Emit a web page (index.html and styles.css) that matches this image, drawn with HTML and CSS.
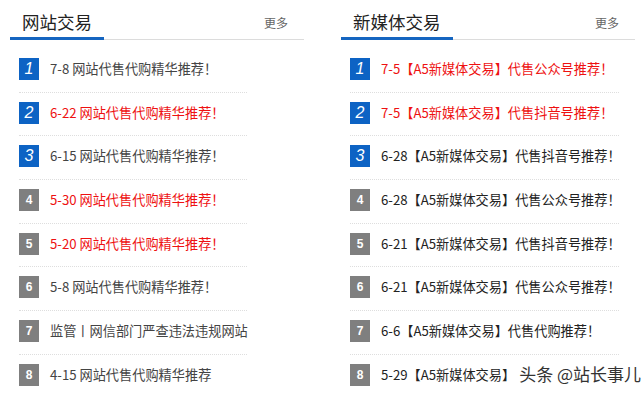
FILE: index.html
```html
<!DOCTYPE html>
<html lang="zh-CN">
<head>
<meta charset="utf-8">
<title>交易</title>
<link rel="stylesheet" href="styles.css">
</head>
<body>
<div class="page">
  <section class="panel">
    <div class="panel-head">
      <h2 class="panel-title">网站交易</h2>
      <a class="more">更多</a>
    </div>
    <ul class="list list-left">
      <li class="item"><span class="badge badge-top">1</span><span class="text">7-8 网站代售代购精华推荐！</span></li>
      <li class="item"><span class="badge badge-top">2</span><span class="text hot">6-22 网站代售代购精华推荐！</span></li>
      <li class="item"><span class="badge badge-top">3</span><span class="text">6-15 网站代售代购精华推荐！</span></li>
      <li class="item"><span class="badge">4</span><span class="text hot">5-30 网站代售代购精华推荐！</span></li>
      <li class="item"><span class="badge">5</span><span class="text hot">5-20 网站代售代购精华推荐！</span></li>
      <li class="item"><span class="badge">6</span><span class="text">5-8 网站代售代购精华推荐！</span></li>
      <li class="item"><span class="badge">7</span><span class="text">监管丨网信部门严查违法违规网站</span></li>
      <li class="item"><span class="badge">8</span><span class="text">4-15 网站代售代购精华推荐</span></li>
    </ul>
  </section>
  <section class="panel">
    <div class="panel-head">
      <h2 class="panel-title">新媒体交易</h2>
      <a class="more">更多</a>
    </div>
    <ul class="list list-right">
      <li class="item"><span class="badge badge-top">1</span><span class="text hot">7-5【A5新媒体交易】代售公众号推荐！</span></li>
      <li class="item"><span class="badge badge-top">2</span><span class="text hot">7-5【A5新媒体交易】代售抖音号推荐！</span></li>
      <li class="item"><span class="badge badge-top">3</span><span class="text dark">6-28【A5新媒体交易】代售抖音号推荐！</span></li>
      <li class="item"><span class="badge">4</span><span class="text dark">6-28【A5新媒体交易】代售公众号推荐！</span></li>
      <li class="item"><span class="badge">5</span><span class="text dark">6-21【A5新媒体交易】代售抖音号推荐！</span></li>
      <li class="item"><span class="badge">6</span><span class="text dark">6-21【A5新媒体交易】代售公众号推荐！</span></li>
      <li class="item"><span class="badge">7</span><span class="text dark">6-6【A5新媒体交易】代售代购推荐！</span></li>
      <li class="item"><span class="badge">8</span><span class="text dark">5-29【A5新媒体交易】</span><span class="watermark">头条 @站长事儿</span></li>
    </ul>
  </section>
</div>
</body>
</html>
```
FILE: styles.css
```css
html, body {
  margin: 0;
  padding: 0;
  background: #ffffff;
}
body {
  width: 644px;
  height: 397px;
  overflow: hidden;
  font-family: "Noto Sans CJK SC", "Noto Sans", "Liberation Sans", sans-serif;
}
.page {
  display: flex;
  gap: 37px;
  padding-left: 10px;
}
.panel {
  width: 294px;
}
.panel-head {
  display: flex;
  align-items: flex-start;
  height: 40px;
  box-sizing: border-box;
  border-bottom: 1px solid #dcdcdc;
}
.panel-title {
  margin: 0;
  height: 40px;
  box-sizing: border-box;
  padding: 6px 12px 0 12px;
  line-height: 31px;
  font-size: 17.5px;
  font-weight: normal;
  color: #222;
  border-bottom: 3px solid #1565c0;
}
.more {
  margin-left: auto;
  margin-right: 16px;
  padding-top: 4px;
  line-height: 38px;
  font-size: 12px;
  color: #666;
}
.list {
  list-style: none;
  margin: 9px 0 0 0;
  padding: 0 0 0 9px;
}
.list-left { width: 228px; }
.list-right { width: 269px; }
.item {
  display: flex;
  align-items: flex-start;
  height: 43.7px;
  box-sizing: border-box;
  padding-top: 9px;
  border-bottom: 1px dotted #dedede;
}
.badge {
  flex: none;
  width: 20px;
  height: 22px;
  background: #7f7f7f;
  color: #fff;
  font-family: "Liberation Sans", Arial, sans-serif;
  font-weight: bold;
  font-size: 12px;
  line-height: 22px;
  text-align: center;
}
.badge-top {
  background: #0d63c4;
  font-weight: normal;
  font-style: italic;
  font-size: 16px;
}
.text {
  margin-left: 11px;
  font-size: 13.2px;
  line-height: 22px;
  color: #444;
  white-space: nowrap;
}
.text.dark { color: #222; }
.text.hot { color: #ee1111; }
.watermark {
  margin-left: 4px;
  margin-top: -2px;
  font-size: 17px;
  line-height: 24px;
  color: #333;
  white-space: nowrap;
}
```
